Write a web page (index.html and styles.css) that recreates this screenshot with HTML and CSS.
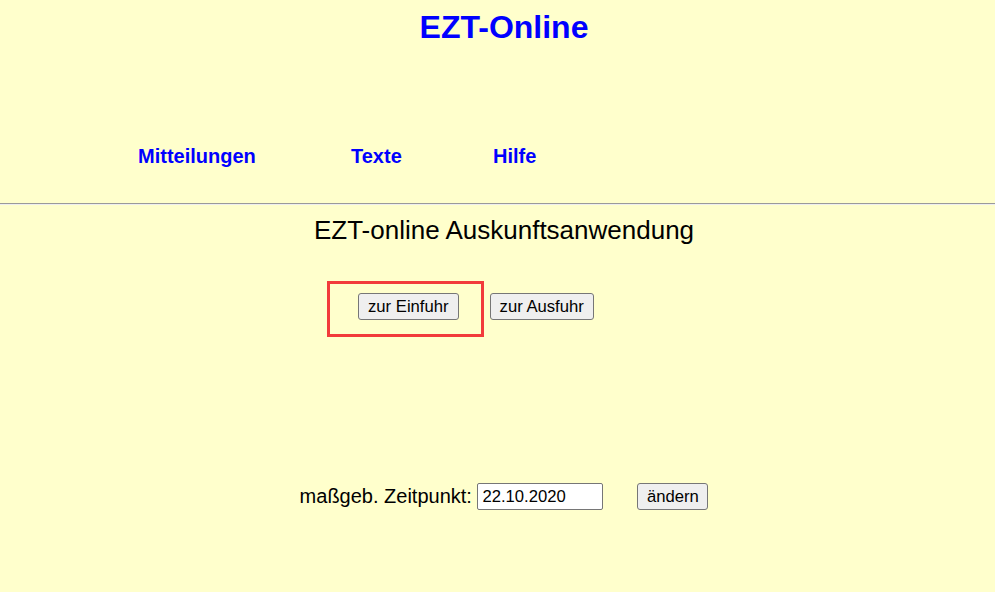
FILE: index.html
```html
<!DOCTYPE html>
<html lang="de">
<head>
<meta charset="utf-8">
<title>EZT-Online</title>
<link rel="stylesheet" href="styles.css">
</head>
<body>
<header class="header">
  <h1 class="title">EZT-Online</h1>
  <nav class="nav">
    <a class="nav-link" href="#">Mitteilungen</a>
    <a class="nav-link" href="#">Texte</a>
    <a class="nav-link" href="#">Hilfe</a>
  </nav>
</header>
<hr class="rule">
<main class="main">
  <h2 class="subtitle">EZT-online Auskunftsanwendung</h2>
  <div class="choice-row">
    <button class="btn" type="button">zur Einfuhr</button>
    <button class="btn" type="button">zur Ausfuhr</button>
    <div class="highlight"></div>
  </div>
  <form class="date-row">
    <label class="date-label" for="zp">maßgeb. Zeitpunkt:</label>
    <input class="date-input" id="zp" type="text" value="22.10.2020">
    <button class="btn btn-change" type="button">ändern</button>
  </form>
</main>
</body>
</html>
```
FILE: styles.css
```css
html, body {
  margin: 0;
  padding: 0;
}
body {
  background: #ffffcc;
  font-family: "Liberation Sans", Arial, sans-serif;
  color: #000;
  height: 592px;
  overflow: hidden;
}
.header {
  padding-top: 7px;
}
.title {
  margin: 0;
  padding-left: 13px;
  text-align: center;
  font-size: 32px;
  line-height: 40px;
  font-weight: bold;
  color: #0000ff;
}
.nav {
  display: grid;
  grid-template-columns: 213px 142px auto;
  padding-left: 138px;
  margin-top: 98px;
  line-height: 23px;
}
.nav-link {
  color: #0000ff;
  font-size: 20px;
  font-weight: bold;
  text-decoration: none;
}
.rule {
  margin: 35px 0 0;
  height: 0;
  border: 0;
  border-top: 1px solid #9a9a9a;
  border-bottom: 1px solid #eeeeee;
}
.main {
  padding-left: 13px;
}
.subtitle {
  margin: 10px 0 0;
  text-align: center;
  font-size: 26px;
  line-height: 30px;
  font-weight: normal;
}
.choice-row {
  position: relative;
  display: flex;
  gap: 31px;
  margin-top: 48px;
  padding-left: 345px;
}
.btn {
  font-family: "Liberation Sans", Arial, sans-serif;
  font-size: 16.67px;
  height: 27px;
  padding: 0 9px;
  border: 1px solid #767676;
  border-radius: 3px;
  background: #efefef;
  color: #000;
  line-height: 25px;
}
.highlight {
  position: absolute;
  left: 314px;
  top: -12px;
  width: 151px;
  height: 50px;
  border: 3px solid #f23b3b;
  pointer-events: none;
}
.date-row {
  display: flex;
  align-items: center;
  justify-content: center;
  margin: 163px 0 0;
}
.date-label {
  font-size: 20px;
  line-height: 23px;
  margin-right: 5.5px;
}
.date-input {
  box-sizing: border-box;
  width: 126px;
  height: 27px;
  padding: 0 4px;
  border: 1px solid #767676;
  border-radius: 2px;
  background: #fff;
  font-family: "Liberation Sans", Arial, sans-serif;
  font-size: 16.67px;
  color: #000;
  margin: 0 34px 0 0;
}
.btn-change {
  width: 71px;
  padding: 0;
}
```
